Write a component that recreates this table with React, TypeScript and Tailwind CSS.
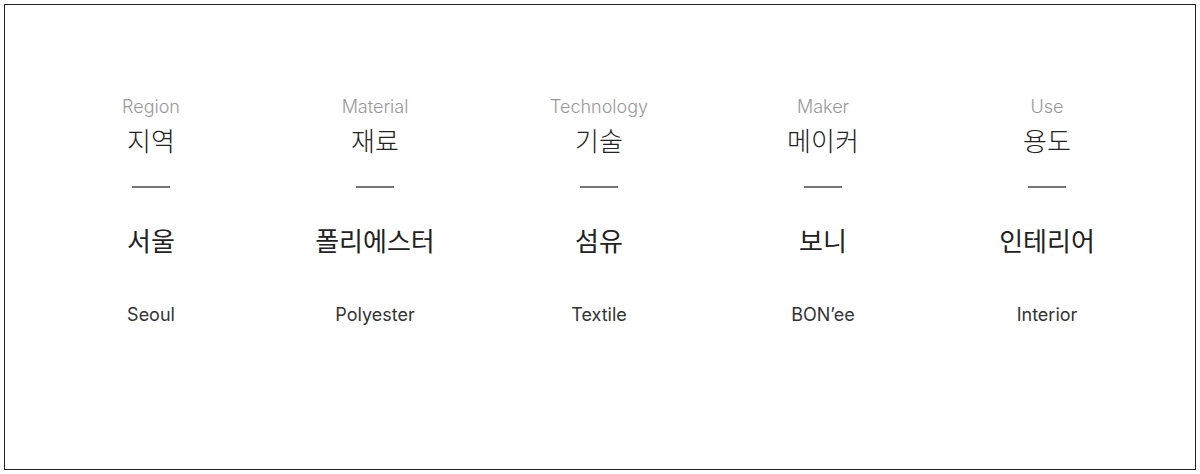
import React from "react";

const items = [
  { en: "Region", ko: "지역", value: "서울", sub: "Seoul" },
  { en: "Material", ko: "재료", value: "폴리에스터", sub: "Polyester" },
  { en: "Technology", ko: "기술", value: "섬유", sub: "Textile" },
  { en: "Maker", ko: "메이커", value: "보니", sub: "BON’ee" },
  { en: "Use", ko: "용도", value: "인테리어", sub: "Interior" },
];

export default function App() {
  return (
    <div
      className="w-[1200px] h-[474px] bg-white p-[4px]"
      style={{ fontFamily: '"Inter", "Noto Sans CJK KR", sans-serif' }}
    >
      <div className="h-full border border-[#222] pt-[92px]">
        <div className="ml-[34px] grid w-[1120px] grid-cols-5">
          {items.map((it) => (
            <div key={it.en} className="flex flex-col items-center">
              <div className="text-[18px] font-light leading-[20px] text-[#999]">{it.en}</div>
              <div className="mt-[8px] text-[26px] font-light leading-[30px] text-[#222]" style={{ fontFamily: '"Noto Sans CJK KR", sans-serif' }}>
                {it.ko}
              </div>
              <div className="mt-[31px] h-[2px] w-[38px] bg-[#777]" />
              <div className="mt-[37px] text-[26px] font-normal leading-[30px] text-[#222]" style={{ fontFamily: '"Noto Sans CJK KR", sans-serif' }}>
                {it.value}
              </div>
              <div className="mt-[48px] text-[18px] font-normal leading-[24px] text-[#333]">{it.sub}</div>
            </div>
          ))}
        </div>
      </div>
    </div>
  );
}
